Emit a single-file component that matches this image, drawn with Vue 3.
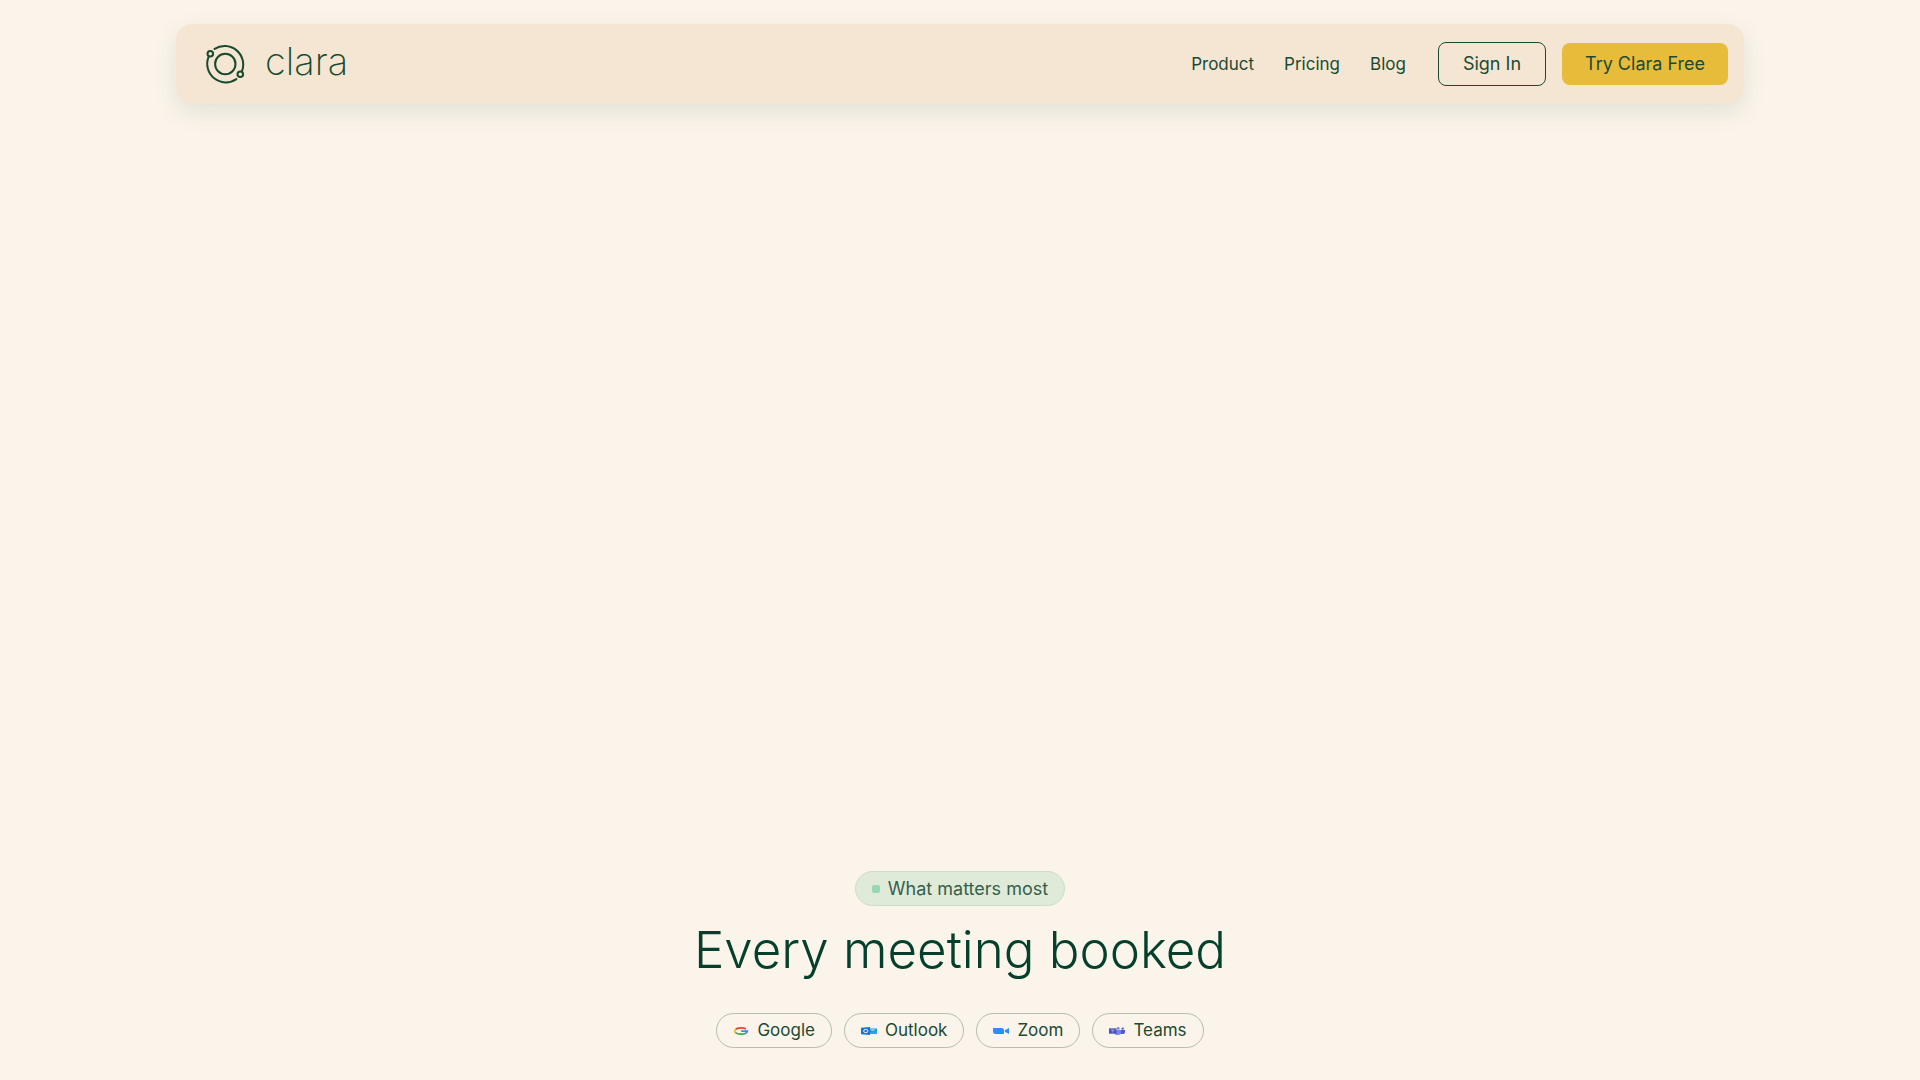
<template>
  <div class="page">
    <header class="navbar">
      <a class="brand" href="#" aria-label="Clara home">
        <svg class="brand__mark" viewBox="0 0 40 40" aria-hidden="true">
          <g fill="none" stroke="currentColor" stroke-width="2" stroke-linecap="round">
            <circle cx="20.300" cy="20" r="10.200" />
            <circle cx="5.300" cy="9.800" r="2.800" />
            <circle cx="35.300" cy="30.200" r="2.800" />
            <path d="M9.600 4.900A18.600 18.600 0 0 1 37 27.200" />
            <path d="M31.400 35.100A18.600 18.600 0 0 1 3.600 12.800" />
          </g>
        </svg>
        <span class="brand__name">clara</span>
      </a>
      <nav class="navbar__links">
        <a v-for="link in links" :key="link" class="navbar__link" href="#">{{ link }}</a>
      </nav>
      <div class="navbar__actions">
        <button class="btn btn--outline" type="button">Sign In</button>
        <button class="btn btn--primary" type="button">Try Clara Free</button>
      </div>
    </header>

    <main class="hero">
      <div class="badge"><span class="badge__dot" />What matters most</div>
      <h1 class="hero__title">Every meeting booked</h1>
      <ul class="chips">
        <li class="chip">
          <svg class="chip__icon" viewBox="0 0 16 8" aria-hidden="true">
            <g fill="none" stroke-width="1.7">
              <path stroke="#ea4335" d="M2.400 2.500C4.400.5 10.400.4 12.900 2" />
              <path stroke="#fbbc05" d="M2.600 2.300C1.700 3.200 1.700 4.700 2.600 5.600" />
              <path stroke="#34a853" d="M2.400 5.500C4.400 7.500 10 7.600 12.700 6.200" />
              <path stroke="#4285f4" d="M8.200 4.100H14.400C14.400 5.200 13.600 6 12.400 6.500" />
            </g>
          </svg>
          Google
        </li>
        <li class="chip">
          <svg class="chip__icon" viewBox="0 0 16 8" aria-hidden="true">
            <path fill="#1490df" d="M8 1.500h8V7H8z" />
            <path fill="#fbf3ea" d="M9.500 2.600h5.500l-3 1.200-2.500-.5z" />
            <path fill="#28a8ea" d="M9 5.500l7-2V7H9z" />
            <path fill="#0f78d4" d="M0 .8L9 0v8L0 7.200z" />
            <ellipse cx="4.800" cy="4" rx="2.200" ry="1.600" fill="none" stroke="#fff" stroke-width=".9" />
          </svg>
          Outlook
        </li>
        <li class="chip">
          <svg class="chip__icon" viewBox="0 0 16 8" aria-hidden="true">
            <path fill="#2d8cff" d="M0 1h8.500Q11 1 11 3v4H2.500Q0 7 0 5zM11.800 3.200L16 1v6l-4.200-2.200z" />
          </svg>
          Zoom
        </li>
        <li class="chip">
          <svg class="chip__icon" viewBox="0 0 16 8" aria-hidden="true">
            <circle cx="13.700" cy="1.600" r="1.200" fill="#5059c9" />
            <circle cx="9.200" cy="1.400" r="1.400" fill="#7b83eb" />
            <path fill="#5059c9" d="M11 3h5v2.200Q16 7 13 7h-2z" />
            <path fill="#7b83eb" d="M5.500 3H12v2.800Q12 8 8.800 8 5.500 8 5.500 6z" />
            <path fill="#4b53bc" d="M0 1.300h7.500v5.400H0z" />
            <path fill="#9ea4e4" d="M2 2.600h3.500v.8H4.200v2.200h-.9V3.400H2z" />
          </svg>
          Teams
        </li>
      </ul>
    </main>
  </div>
</template>

<script setup>
const links = ['Product', 'Pricing', 'Blog'];
</script>

<style>
body {
  background: #fbf4ea;
}
</style>

<style scoped>
.page {
  display: flex;
  flex-direction: column;
  box-sizing: border-box;
  min-height: 100vh;
  padding: 24px 24px 32px;
  color: #1b4a32;
  font-family: Inter, 'Liberation Sans', sans-serif;
}

.navbar {
  display: flex;
  align-items: center;
  box-sizing: border-box;
  width: 100%;
  max-width: 1568px;
  min-height: 80px;
  margin: 0 auto;
  padding: 0 16px 0 29px;
  border-radius: 16px;
  background: #f4e6d3;
  box-shadow: 0 8px 24px rgba(0, 64, 48, 0.1);
}

.brand {
  display: flex;
  align-items: center;
  gap: 20px;
  margin-right: auto;
  color: #174a2e;
  text-decoration: none;
}

.brand__mark {
  width: 40px;
  height: 40px;
}

.brand__name {
  padding-bottom: 6px;
  font-size: 38px;
  font-weight: 200;
  line-height: 40px;
}

.navbar__links {
  display: flex;
  gap: 30px;
  margin-right: 32px;
}

.navbar__link {
  color: inherit;
  font-size: 17px;
  line-height: 24px;
  text-decoration: none;
}

.navbar__actions {
  display: flex;
  align-items: center;
  gap: 16px;
}

.btn {
  padding: 9px 23px;
  border: 0;
  border-radius: 8px;
  color: inherit;
  font-family: inherit;
  font-size: 18px;
  line-height: 24px;
  cursor: pointer;
}

.btn--outline {
  padding: 9px 24px;
  border: 1px solid #1b4a32;
  background: transparent;
}

.btn--primary {
  background: #e7bc3b;
}

.hero {
  display: flex;
  flex: 1;
  flex-direction: column;
  align-items: center;
  justify-content: flex-end;
}

.badge {
  display: flex;
  align-items: center;
  gap: 8px;
  padding: 4px 16px;
  border: 1px solid #c9dfca;
  border-radius: 18px;
  background: #e0ead9;
  color: #35604a;
  font-size: 18px;
  line-height: 25px;
}

.badge__dot {
  width: 8px;
  height: 8px;
  border-radius: 2px;
  background: #97d7b5;
}

.hero__title {
  margin: 8px 0 27px;
  color: #04402b;
  font-size: 51px;
  font-weight: 300;
  line-height: 72px;
  text-align: center;
}

.chips {
  display: flex;
  flex-wrap: wrap;
  justify-content: center;
  gap: 12px;
  margin: 0;
  padding: 0;
  list-style: none;
}

.chip {
  display: flex;
  align-items: center;
  gap: 8px;
  padding: 4px 16px;
  border: 1px solid #b5bdac;
  border-radius: 18px;
  font-size: 17px;
  line-height: 25px;
}

.chip__icon {
  width: 16px;
  height: 8px;
}
</style>
